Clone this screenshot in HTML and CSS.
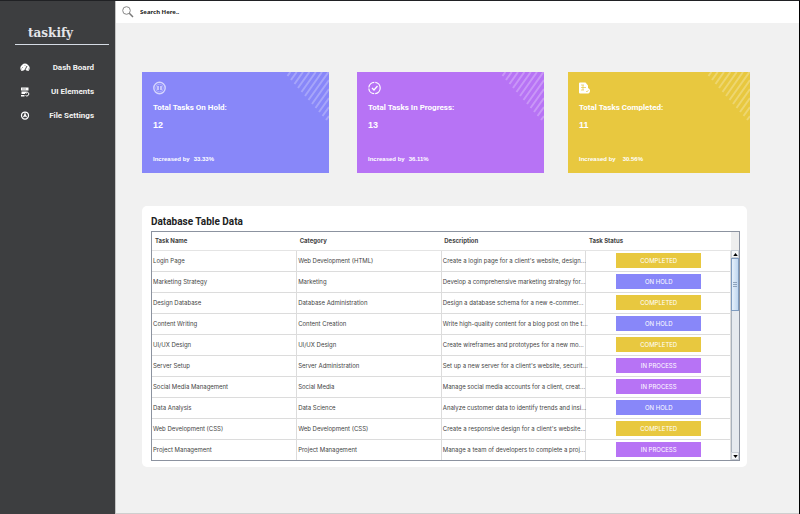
FILE: index.html
```html
<!DOCTYPE html>
<html lang="en">
<head>
<meta charset="utf-8">
<title>taskify</title>
<link rel="stylesheet" href="styles.css">
</head>
<body>
<svg width="0" height="0" class="defs" aria-hidden="true">
  <symbol id="stripes" viewBox="0 0 45 52"><path d="M3.500 4L6.400 0M7 8L12.700 0M10.500 12L19 0M14 16L25.400 0M17.500 20L31.800 0M21 24L38 0M24.500 28L44.500 0M28 32L45 8M31.500 36L45 17M35 40L45 26M38.500 44L45 35M42 48L45 44"/></symbol>
</svg>
<div class="app">
  <aside class="sidebar">
    <h1 class="brand">taskify</h1>
    <nav class="menu">
      <a class="menu-item" href="#"><svg class="menu-icon" viewBox="0 0 20 20"><path d="M3 16A9 9 0 1 1 17 16L13 15A4 4 0 0 0 7 15Z" fill="#fff"/><path d="M10 14L14 6M5 8v1M10 4v1M3 12h1M16 12h1" stroke="#3d3e40" stroke-width="1.8"/></svg><span>Dash Board</span></a>
      <a class="menu-item" href="#"><svg class="menu-icon" viewBox="0 0 20 20"><path d="M2 1h15v6H2zM3 9h7v5H3zM2 16h7v3H2z" fill="#fff"/><path d="M4 4h8" stroke="#3d3e40"/><path d="M11 11a4 4 0 1 1 0 6M11 9v3h3" fill="none" stroke="#fff" stroke-width="2"/></svg><span>UI Elements</span></a>
      <a class="menu-item" href="#"><svg class="menu-icon" viewBox="0 0 20 20"><circle cx="10" cy="9" r="7" fill="none" stroke="#fff" stroke-width="2.500"/><circle cx="10" cy="9" r="2.500" fill="#fff"/><path d="M10 9V3M10 9L5 13M10 9L15 13" stroke="#fff" stroke-width="2"/></svg><span>File Settings</span></a>
    </nav>
  </aside>
  <div class="page">
    <div class="search">
      <svg class="search-icon" viewBox="0 0 12 12"><circle cx="4.500" cy="4.500" r="3.800" fill="none" stroke="#888" stroke-width="1"/><path d="M7.300 7.300L11 11" stroke="#777" stroke-width="1.500"/></svg>
      <input class="search-input" type="text" aria-label="Search" value="Search Here..">
    </div>
    <main class="content">
      <section class="cards">
        <article class="card hold">
          <svg class="stripes"><use href="#stripes"/></svg>
          <svg class="card-icon" viewBox="0 0 14 14" fill="none" stroke="#fff"><circle cx="6.500" cy="7" r="5.700" stroke-width="1.400" stroke-opacity=".65"/><circle cx="6.500" cy="7" r="3.800" stroke-opacity=".3"/><path d="M5 5v4M8 5v4" stroke-width="1.300" stroke-opacity=".8"/></svg>
          <h2 class="card-title">Total Tasks On Hold:</h2>
          <p class="card-count">12</p>
          <p class="card-note"><span>Increased by</span><span>33.33%</span></p>
        </article>
        <article class="card progress">
          <svg class="stripes"><use href="#stripes"/></svg>
          <svg class="card-icon" viewBox="0 0 14 14" fill="none" stroke="#fff"><circle cx="6.500" cy="7" r="5.700" stroke-width="1.200" stroke-dasharray="8 1"/><path d="M4 7l2 2 3.500-4" stroke-width="1.300"/></svg>
          <h2 class="card-title">Total Tasks In Progress:</h2>
          <p class="card-count">13</p>
          <p class="card-note"><span>Increased by</span><span>36.11%</span></p>
        </article>
        <article class="card done">
          <svg class="stripes"><use href="#stripes"/></svg>
          <svg class="card-icon" viewBox="0 0 14 14"><path d="M0 2.500Q0 1.500 1 1.500H6.500L9 4.500V7A3 3 0 0 1 9.500 12.500H1Q0 12.500 0 11.500Z" fill="#fff"/><path d="M2 4h3M2 6.500h5M2 9h3M4 4v5" stroke="#e8c83f" stroke-width=".7"/><path d="M7 10l1 1 1.500-2" fill="none" stroke="#e8c83f" stroke-width=".6"/></svg>
          <h2 class="card-title">Total Tasks Completed:</h2>
          <p class="card-count">11</p>
          <p class="card-note wide"><span>Increased by</span><span>30.56%</span></p>
        </article>
      </section>
      <section class="panel">
        <h2 class="panel-title">Database Table Data</h2>
        <div class="frame">
          <table class="tasks">
            <thead><tr><th>Task Name</th><th>Category</th><th>Description</th><th>Task Status</th></tr></thead>
            <tbody>
              <tr><td>Login Page</td><td>Web Development (HTML)</td><td>Create a login page for a client's website, design...</td><td><span class="status done">COMPLETED</span></td></tr>
              <tr><td>Marketing Strategy</td><td>Marketing</td><td>Develop a comprehensive marketing strategy for...</td><td><span class="status hold">ON HOLD</span></td></tr>
              <tr><td>Design Database</td><td>Database Administration</td><td>Design a database schema for a new e-commer...</td><td><span class="status done">COMPLETED</span></td></tr>
              <tr><td>Content Writing</td><td>Content Creation</td><td>Write high-quality content for a blog post on the t...</td><td><span class="status hold">ON HOLD</span></td></tr>
              <tr><td>UI/UX Design</td><td>UI/UX Design</td><td>Create wireframes and prototypes for a new mo...</td><td><span class="status done">COMPLETED</span></td></tr>
              <tr><td>Server Setup</td><td>Server Administration</td><td>Set up a new server for a client's website, securit...</td><td><span class="status progress">IN PROCESS</span></td></tr>
              <tr><td>Social Media Management</td><td>Social Media</td><td>Manage social media accounts for a client, creat...</td><td><span class="status progress">IN PROCESS</span></td></tr>
              <tr><td>Data Analysis</td><td>Data Science</td><td>Analyze customer data to identify trends and insi...</td><td><span class="status hold">ON HOLD</span></td></tr>
              <tr><td>Web Development (CSS)</td><td>Web Development (CSS)</td><td>Create a responsive design for a client's website...</td><td><span class="status done">COMPLETED</span></td></tr>
              <tr><td>Project Management</td><td>Project Management</td><td>Manage a team of developers to complete a proj...</td><td><span class="status progress">IN PROCESS</span></td></tr>
            </tbody>
          </table>
          <div class="scrollbar">
            <div class="corner"></div>
            <button class="arrow" type="button" aria-label="Scroll up"><svg viewBox="0 0 6 4"><path d="M0 4L3 0L6 4Z"/></svg></button>
            <div class="thumb"><svg viewBox="0 0 4 5"><path d="M0 .5h4M0 2.500h4M0 4.500h4" stroke="#7d93ad" stroke-width=".8"/></svg></div>
            <div class="track"></div>
            <button class="arrow" type="button" aria-label="Scroll down"><svg viewBox="0 0 6 4"><path d="M0 0L3 4L6 0Z"/></svg></button>
          </div>
        </div>
      </section>
    </main>
  </div>
</div>
</body>
</html>
```
FILE: styles.css
```css
* { box-sizing: border-box; }

body {
  margin: 0;
  background: #f1f1f1;
  font-family: Inter, "Liberation Sans", sans-serif;
}

h1, h2, p { margin: 0; }

.defs { display: none; }

.app {
  display: grid;
  grid-template-columns: 115px 1fr;
  min-height: 100vh;
  border-top: 1px solid #202124;
  border-right: 1px solid #000;
}

.sidebar {
  padding: 23px 6px 0 15px;
  background: #3d3e40;
}

.brand {
  height: 21px;
  padding-left: 13px;
  border-bottom: 1px solid #d5dbe4;
  color: #e4e5e9;
  font: bold 12px/18px "DejaVu Serif", serif;
}

.menu {
  display: flex;
  flex-direction: column;
  gap: 12px;
  padding: 17px 15px 0 5px;
}

.menu-item {
  display: flex;
  align-items: center;
  justify-content: space-between;
  color: #f2f2f2;
  font: bold 8px/12px Roboto, sans-serif;
  text-decoration: none;
}

.menu-icon { width: 10px; height: 10px; }

.page {
  border-left: 1px solid #c4c4c4;
  border-bottom: 1px solid #cfcfcf;
}

.search {
  display: flex;
  align-items: center;
  gap: 6px;
  height: 22px;
  padding-left: 6px;
  background: #fff;
}

.search-icon { width: 12px; height: 12px; }

.search-input {
  flex: 1;
  padding: 0;
  border: 0;
  outline: 0;
  background: transparent;
  color: #222;
  font: bold 6px/12px "Noto Sans", sans-serif;
}

.content { padding: 49px 49px 46px 26px; }

.cards {
  display: grid;
  grid-template-columns: 215fr 211fr 182fr;
}

.card {
  position: relative;
  height: 101px;
  padding: 9px 11px;
  color: #fff;
}

.card.hold { margin-right: 28px; }
.card.progress { margin-right: 24px; }

.hold { background: #8887f9; }
.progress { background: #b773f5; }
.done { background: #e8c83f; }

.stripes {
  position: absolute;
  top: 0;
  right: 0;
  width: 45px;
  height: 52px;
  stroke: rgba(255, 255, 255, .25);
  stroke-width: 2;
}

.card-icon { display: block; width: 14px; height: 14px; }
.card-title { margin-top: 8px; font: bold 8px/10px Roboto, sans-serif; }
.card-count { margin-top: 7px; font: bold 9px/10px "Liberation Sans", Arial, sans-serif; }
.card-note { display: flex; gap: 4px; margin-top: 24px; font: bold 6px/10px "Liberation Sans", Arial, sans-serif; }
.card-note.wide { gap: 7px; }

.panel {
  margin: 33px 3px 0 0;
  padding: 9px 7px 6px 9px;
  border-radius: 5px;
  background: #fff;
}

.panel-title {
  color: #222;
  font: bold 10px/14px Roboto, sans-serif;
}

.frame {
  display: flex;
  margin-top: 2px;
  border: 1px solid #8c93a0;
}

.tasks {
  flex: 1;
  width: 100%;
  border-collapse: collapse;
  table-layout: fixed;
  color: #444;
  font-size: 6px;
  line-height: 8px;
}

.tasks th {
  height: 18px;
  padding: 0 3px;
  border-bottom: 1px solid #e4e4e4;
  text-align: left;
}

.tasks td {
  height: 21px;
  padding: 0 0 0 1px;
  border-right: 1px solid #dcdcdc;
  border-bottom: 1px solid #dcdcdc;
  white-space: nowrap;
}

.tasks tr:last-child td { border-bottom: 0; }

.status {
  display: block;
  width: 60%;
  margin: 0 auto;
  color: #fff;
  font-size: 6px;
  line-height: 15px;
  text-align: center;
}

.scrollbar {
  display: flex;
  flex: none;
  flex-direction: column;
  width: 8px;
}

.corner { height: 18px; background: #eee; }

.arrow {
  display: flex;
  align-items: center;
  justify-content: center;
  height: 8px;
  padding: 0;
  border: 1px solid #c6ccd4;
  background: #f4f6f8;
}

.arrow svg { width: 5px; height: 3px; }

.thumb {
  display: flex;
  align-items: center;
  justify-content: center;
  height: 53px;
  border: 1px solid #7f9cc0;
  background: linear-gradient(90deg, #e6f0fb, #c0d7f0);
}

.thumb svg { width: 4px; height: 5px; }

.track {
  flex: 1;
  border-left: 1px solid #a9b2bd;
  background: #e6eaef;
}
```
